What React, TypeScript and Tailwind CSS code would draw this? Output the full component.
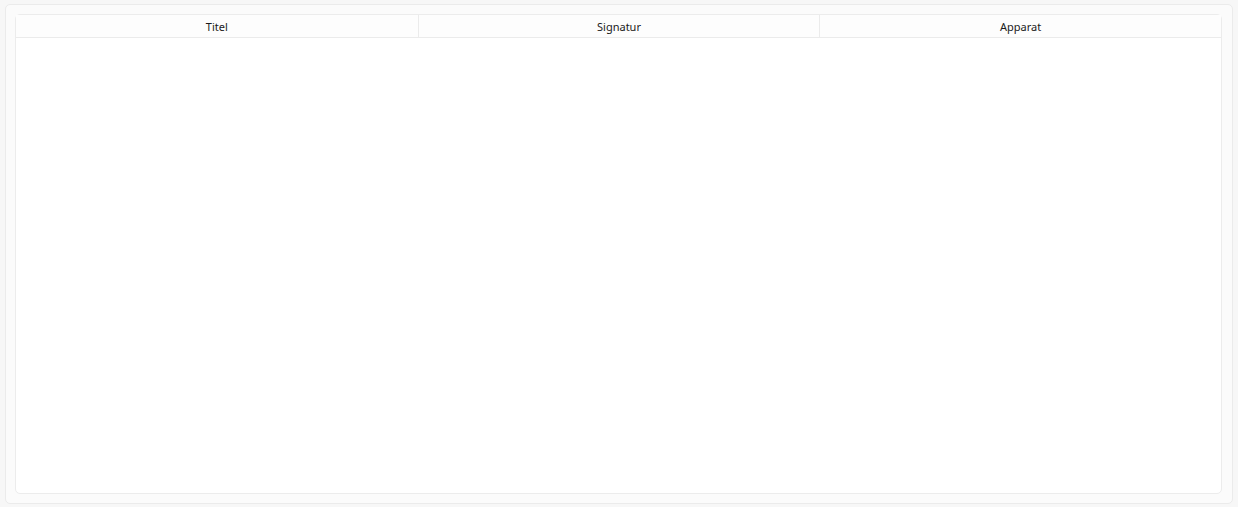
export default function App() {
  const cols = ['Titel', 'Signatur', 'Apparat']

  return (
    <div className="h-[507px] w-full bg-[#f7f7f7] pt-[4px] pb-[3px] px-[5px] font-['Noto_Sans','Open_Sans',sans-serif]">
      <div className="flex h-full flex-col rounded-[5px] border border-[#ebebeb] bg-[#fbfbfb] p-[9px] pr-[10px]">
        <div className="flex flex-1 flex-col rounded-[5px] border border-[#ececec] bg-white">
          <div className="grid grid-cols-3 border-b border-[#ebebeb] bg-[#fdfdfd]">
            {cols.map((c, i) => (
              <div
                key={c}
                className={
                  'flex h-[22px] items-center justify-center pt-[2px] text-[11px] text-[#1a1a1a]' +
                  (i > 0 ? ' border-l border-[#ebebeb]' : '')
                }
              >
                {c}
              </div>
            ))}
          </div>
          <div className="flex-1" />
        </div>
      </div>
    </div>
  )
}
